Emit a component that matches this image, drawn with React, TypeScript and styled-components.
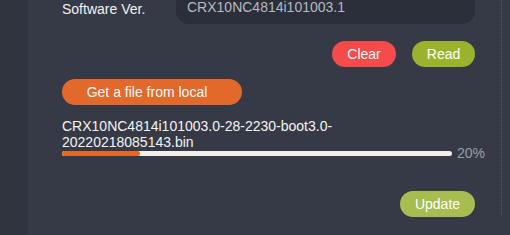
import React from "react";
import styled, { createGlobalStyle } from "styled-components";

const GlobalStyle = createGlobalStyle`
  html, body {
    margin: 0;
    padding: 0;
    background: #363a46;
    overflow: hidden;
  }
  body {
    font-family: "Liberation Sans", Arial, sans-serif;
    font-size: 14px;
    color: #f2f2f2;
  }
`;

const Page = styled.div`
  display: flex;
  width: 510px;
  height: 235px;
  overflow: hidden;
`;

const SideStrip = styled.div`
  width: 28px;
  flex: none;
  background: #30343f;
`;

const Panel = styled.div`
  width: 474px;
  height: 225px;
  margin-top: -10px;
  box-sizing: border-box;
  padding: 0 26px 0 34px;
  border-right: 1px dotted #575b66;
  display: flex;
  flex-direction: column;
`;

const FieldRow = styled.div`
  display: flex;
  align-items: center;
  height: 34px;
`;

const Label = styled.div`
  width: 114px;
  flex: none;
  line-height: 16px;
  margin-top: 4px;
`;

const VersionInput = styled.input`
  flex: 1;
  height: 34px;
  box-sizing: border-box;
  border: none;
  outline: none;
  border-radius: 13px;
  background: #2b2f3a;
  color: #b6bac2;
  font-family: inherit;
  font-size: 14px;
  padding: 0 11px;
`;

const ActionRow = styled.div<{ $top: number; $align?: string }>`
  display: flex;
  justify-content: ${(p) => p.$align || "flex-end"};
  gap: 16px;
  margin-top: ${(p) => p.$top}px;
`;

const PillButton = styled.button<{ $bg: string; $width: number; $shift?: number }>`
  width: ${(p) => p.$width}px;
  height: 26px;
  border: none;
  border-radius: 13px;
  background: ${(p) => p.$bg};
  color: #ffffff;
  font-family: inherit;
  font-size: 14px;
  padding: 0 ${(p) => p.$shift || 0}px 0 0;
  cursor: pointer;
`;

const FileName = styled.div`
  width: 390px;
  margin-top: 13px;
  line-height: 16px;
  color: #f4f4f4;
`;

const ProgressRow = styled.div`
  display: flex;
  align-items: center;
  gap: 5px;
  height: 8px;
  margin-top: -1px;
`;

const Track = styled.div`
  width: 390px;
  height: 5px;
  flex: none;
  border-radius: 3px;
  background: #f2efea;
  overflow: hidden;
`;

const Fill = styled.div`
  height: 100%;
  border-radius: 3px;
  background: #e2692a;
`;

const Percent = styled.span`
  color: #9a9ea8;
  font-size: 14px;
  line-height: 14px;
  white-space: nowrap;
`;

export default function App() {
  const progress = 20;
  return (
    <>
      <GlobalStyle />
      <Page>
        <SideStrip />
        <Panel>
          <FieldRow>
            <Label>Software Ver.</Label>
            <VersionInput readOnly value="CRX10NC4814i101003.1" />
          </FieldRow>
          <ActionRow $top={17}>
            <PillButton $bg="#f54b4b" $width={64}>Clear</PillButton>
            <PillButton $bg="#9bb22e" $width={63}>Read</PillButton>
          </ActionRow>
          <ActionRow $top={12} $align="flex-start">
            <PillButton $bg="#e2692a" $width={180} $shift={10}>Get a file from local</PillButton>
          </ActionRow>
          <FileName>
            CRX10NC4814i101003.0-28-2230-boot3.0-<wbr />20220218085143.bin
          </FileName>
          <ProgressRow>
            <Track>
              <Fill style={{ width: `${progress}%` }} />
            </Track>
            <Percent>{progress}%</Percent>
          </ProgressRow>
          <ActionRow $top={34}>
            <PillButton $bg="#a8bd50" $width={75}>Update</PillButton>
          </ActionRow>
        </Panel>
      </Page>
    </>
  );
}
